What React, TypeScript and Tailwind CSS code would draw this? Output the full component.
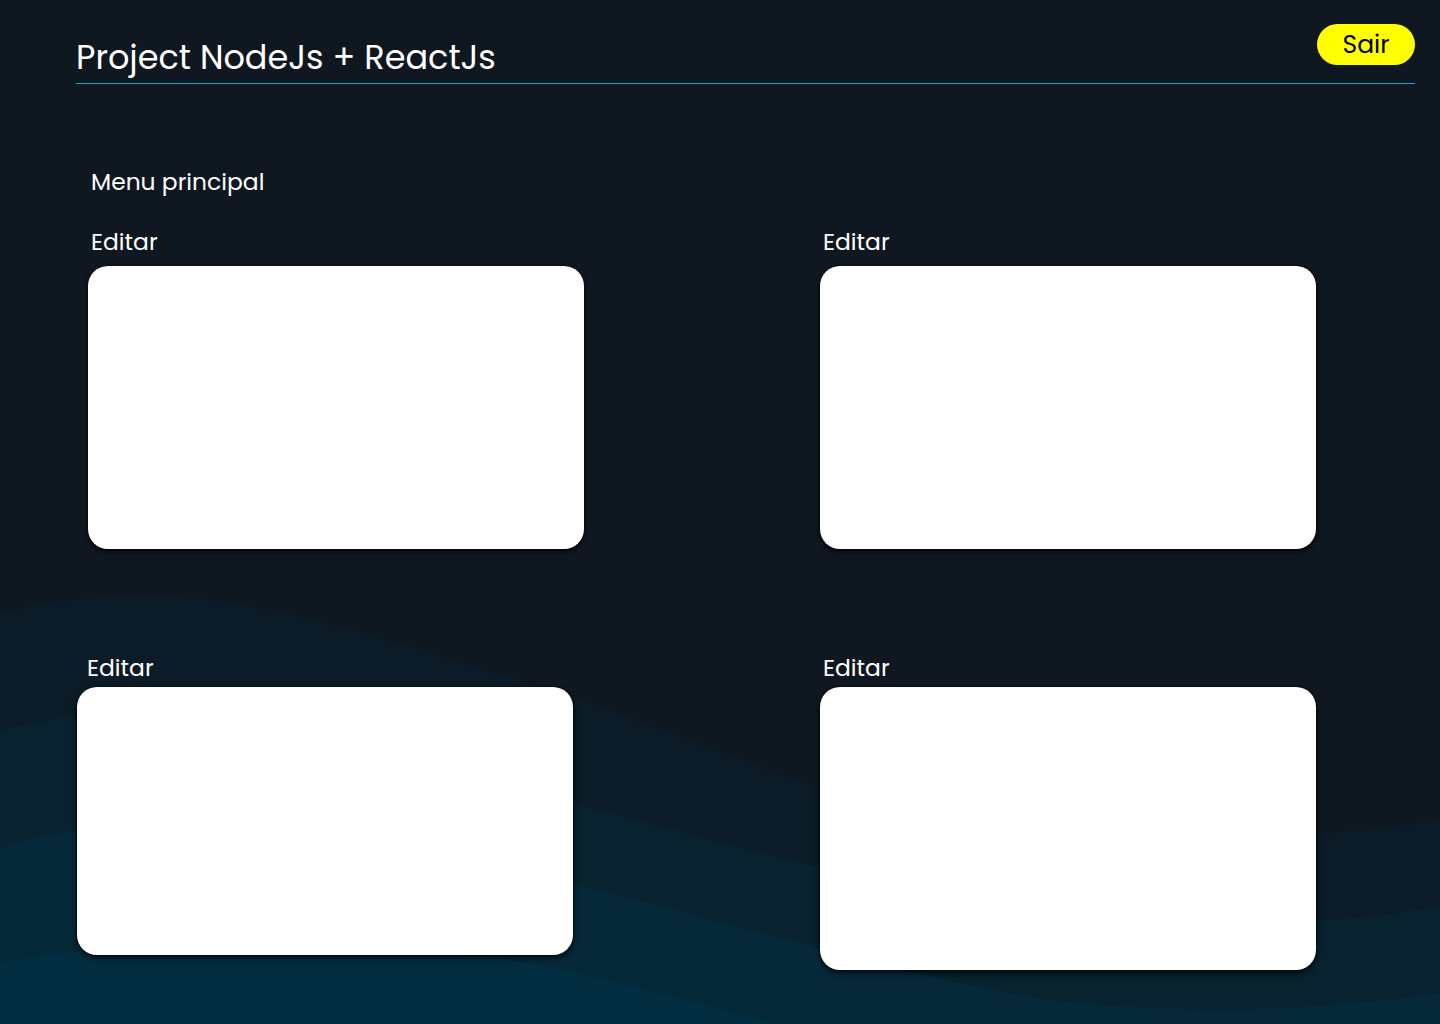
import React from "react";

interface PanelProps {
  labelClass: string;
  cardClass: string;
}

const font = { fontFamily: 'Poppins, "DejaVu Sans", sans-serif' };

const Panel: React.FC<PanelProps> = ({ labelClass, cardClass }) => {
  return (
    <div className="flex flex-col">
      <span className={`text-[23.4px] leading-[33px] text-white ${labelClass}`}>Editar</span>
      <div
        className={`w-[496px] rounded-[20px] bg-white shadow-[0_0_2px_#000,0_3px_6px_rgba(0,0,0,0.7)] ${cardClass}`}
      />
    </div>
  );
};

const Waves = () => (
  <svg
    className="absolute inset-0 h-full w-full"
    viewBox="0 0 1440 1024"
    preserveAspectRatio="none"
    aria-hidden="true"
  >
    <path
      fill="#0b1c28"
      d="M0,612 C60,600 110,594 160,596 C280,600 420,650 580,700 C700,740 780,780 900,810 C1020,835 1150,845 1250,838 C1330,834 1390,828 1440,820 V1024 H0 Z"
    />
    <path
      fill="#08222f"
      d="M0,730 C50,718 100,711 160,712 C300,716 450,770 600,810 C700,838 760,852 820,868 C950,905 1100,930 1250,925 C1330,922 1390,915 1440,906 V1024 H0 Z"
    />
    <path
      fill="#06293a"
      d="M0,848 C60,830 120,820 200,820 C330,822 450,850 574,883 C660,906 740,928 817,948 C920,975 1020,1000 1100,1005 C1180,1010 1250,1011 1320,1006 C1370,1002 1410,998 1440,993 V1024 H0 Z"
    />
    <path
      fill="#032e41"
      d="M0,962 C40,955 80,950 150,948 C260,948 400,952 500,958 C600,975 700,1005 778,1024 H0 Z"
    />
  </svg>
);

export default function App() {
  return (
    <div className="relative min-h-[1024px] w-full overflow-hidden bg-[#0f1821]" style={font}>
      <Waves />
      <div className="relative">
        {/* Header */}
        <header className="ml-[76px] mr-[25px] flex items-start justify-between border-b border-[#21a1d6] pt-[24px]">
          <h1 className="mt-[9px] text-[33.5px] leading-[50px] text-white">Project NodeJs + ReactJs</h1>
          <button className="flex h-[41px] w-[98px] items-center justify-center rounded-full bg-[#ffff00] text-[25px] text-black">
            Sair
          </button>
        </header>

        {/* Body */}
        <main className="pl-[77px] pt-[81px]">
          <h2 className="ml-[14px] text-[23.4px] leading-[33px] text-white">Menu principal</h2>
          <div className="mt-[27px] grid grid-cols-[743px_496px] gap-y-[102px]">
            <Panel labelClass="ml-[14px] mb-[8px]" cardClass="ml-[11px] h-[283px]" />
            <Panel labelClass="ml-[3px] mb-[8px]" cardClass="h-[283px]" />
            <Panel labelClass="ml-[10px] mb-[3px]" cardClass="h-[268px]" />
            <Panel labelClass="ml-[3px] mb-[3px]" cardClass="h-[283px]" />
          </div>
        </main>
      </div>
    </div>
  );
}
